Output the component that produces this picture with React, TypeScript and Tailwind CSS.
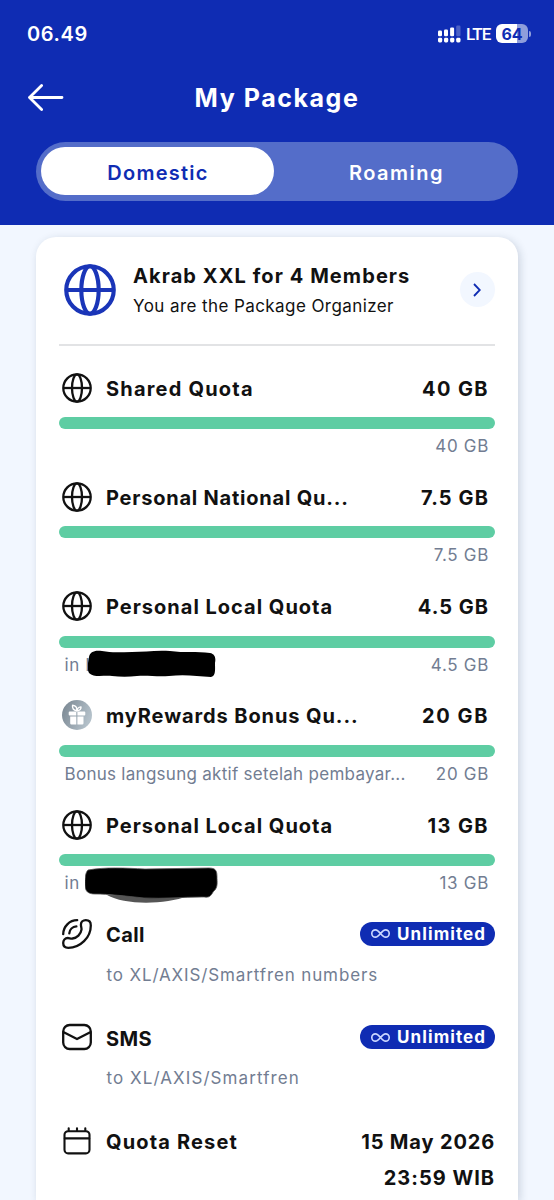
import React from "react";

type IconProps = { className?: string };

function Globe({ className, weight }: IconProps & { weight: number }) {
  return (
    <svg viewBox="0 0 30 30" fill="none" stroke="currentColor" strokeWidth={weight} className={className}>
      <circle cx="15" cy="15" r="13.7" />
      <ellipse cx="15" cy="15" rx="5" ry="13.7" />
      <path d="M1.2 15h27.6" />
    </svg>
  );
}

function Gift({ className }: IconProps) {
  return (
    <svg viewBox="0 0 30 30" className={className}>
      <defs>
        <linearGradient id="silver" x1="0" y1="0" x2="1" y2="0.4">
          <stop offset="0" stopColor="#77848f" />
          <stop offset="1" stopColor="#b3c0c9" />
        </linearGradient>
      </defs>
      <circle cx="15" cy="15" r="15" fill="url(#silver)" />
      <g fill="#fff">
        <path d="M7.7 11.400h6.600v4H7.700a1 1 0 0 1-1-1v-2a1 1 0 0 1 1-1zM15.400 11.400h6.900a1 1 0 0 1 1 1v2a1 1 0 0 1-1 1h-6.900z" />
        <path d="M8.200 16.500h6.100v8H9.400a1.200 1.200 0 0 1-1.200-1.200zM15.400 16.500h6.100v6.800a1.200 1.200 0 0 1-1.200 1.200h-4.900z" />
      </g>
      <g fill="none" stroke="#fff" strokeWidth="1.400" strokeLinejoin="round" strokeLinecap="round">
        <path d="M14.800 10.800c.5-2.900-.6-5.300-4.200-5.600-.7 3.200 1 5 4.200 5.600z" />
        <path d="M14.900 10.800c.2-2.200 1.500-3.600 4.100-3.900.2 2.200-1.500 3.600-4.100 3.900z" />
      </g>
    </svg>
  );
}

function Handset({ className }: IconProps) {
  return (
    <svg viewBox="0 0 30 30" fill="none" stroke="currentColor" strokeWidth="2.300" strokeLinecap="round" className={className}>
      <path d="M18.900 5.800C18.900 3 21 1.200 23.800 1.200c3.100 0 5 2 5 5.200C28.800 18.600 18.300 28.800 6.300 28.800c-3.300 0-5.100-2-5.100-4.800 0-2.900 1.800-5 4.600-5 1.600 0 2.800.700 4.700.500 4.400-.500 8.400-4.300 9-8.900.200-1.800-.600-3-.600-4.800z" />
      <path d="M1.200 15.200C1.200 7.500 7.500 1.200 15.200 1.200" />
      <path d="M7.300 14.300c.300-3.800 3.300-6.700 7.100-7" />
    </svg>
  );
}

function Envelope({ className }: IconProps) {
  return (
    <svg viewBox="0 0 30 30" fill="none" stroke="currentColor" strokeWidth="2.300" strokeLinejoin="round" className={className}>
      <rect x="1.200" y="3" width="27.600" height="24" rx="6.500" />
      <path d="M1.300 10 15 17l13.700-7" />
    </svg>
  );
}

function Calendar({ className }: IconProps) {
  return (
    <svg viewBox="0 0 30 30" fill="none" stroke="currentColor" strokeWidth="2.100" strokeLinecap="round" className={className}>
      <rect x="2.500" y="5.200" width="25" height="22.200" rx="3.600" />
      <path d="M2.800 12.400h24.400M6.700 4.800V2.200M15 4.800V2.200M23.300 4.800V2.200" />
    </svg>
  );
}

function StatusBar() {
  return (
    <div className="flex h-[67px] items-center justify-between pr-[23px] pl-[27px] text-white">
      <span className="text-[20px] leading-6 font-semibold tracking-[0.6px]">06.49</span>
      <div className="flex items-center">
        <svg viewBox="0 0 23 18" className="mr-[5px] h-[18px] w-[23px]" fill="#fff">
          <rect x="0" y="5.500" width="4" height="5.700" rx="1.200" />
          <rect x="6" y="4.500" width="4" height="6.700" rx="1.200" />
          <rect x="12.100" y="2.500" width="4" height="8.700" rx="1.200" />
          <rect x="18.200" y="0.500" width="4.300" height="10.700" rx="1.200" opacity="0.250" />
          <rect x="0" y="12.800" width="4.200" height="4.600" rx="1.400" />
          <rect x="6" y="12.800" width="4.200" height="4.600" rx="1.400" />
          <rect x="12.100" y="12.800" width="4.200" height="4.600" rx="1.400" />
          <rect x="18.200" y="12.800" width="4.300" height="4.600" rx="1.400" />
        </svg>
        <span className="w-[30px] font-['Roboto',sans-serif] text-[17px] leading-5 font-medium tracking-[-0.9px] whitespace-nowrap">LTE</span>
        <div className="flex h-[19px] w-[32px] items-center justify-center rounded-[6px] bg-linear-to-r from-white from-[65%] to-[#8f9edb] to-[65%] text-[16px] leading-none font-bold text-[#0f2cb3]">
          64
        </div>
        <div className="ml-px h-[6px] w-[2px] rounded-r-full bg-[#8f9edb]" />
      </div>
    </div>
  );
}

const globe = <Globe weight={2.3} className="-mt-px size-[30px]" />;

type Quota = {
  icon: React.ReactNode;
  name: string;
  nameClass: string;
  amount: string;
  amountClass: string;
  note?: string;
  noteClass?: string;
  hidden?: React.ReactNode;
};

const quotas: Quota[] = [
  { icon: globe, name: "Shared Quota", nameClass: "tracking-[1.2px]", amount: "40 GB", amountClass: "tracking-[1.4px]" },
  { icon: globe, name: "Personal National Qu...", nameClass: "tracking-[0.78px]", amount: "7.5 GB", amountClass: "tracking-[1.1px]" },
  {
    icon: globe,
    name: "Personal Local Quota",
    nameClass: "tracking-[1px]",
    amount: "4.5 GB",
    amountClass: "tracking-[1px]",
    note: "in K",
    noteClass: "tracking-[0.6px]",
    hidden: (
      <svg viewBox="0 0 132 36" className="absolute top-0 left-[29px] h-[36px] w-[132px]">
        <path d="M1 9C2 4 6 2 14 3c10 2 19 1 30 1 12 0 24-2 38-1 14 2 27 0 40 2 5 1 6 5 5 10 0 6 1 13-4 14-14-1-27-3-42-1-12 1-22-1-32 0-8 1-17 1-25 0-8-1-18 2-23-3-2-4-1-7-1-10z" fill="#000" />
      </svg>
    ),
  },
  {
    icon: <Gift className="-mt-px size-[30px]" />,
    name: "myRewards Bonus Qu...",
    nameClass: "tracking-[0.9px]",
    amount: "20 GB",
    amountClass: "tracking-[1.6px]",
    note: "Bonus langsung aktif setelah pembayar...",
    noteClass: "tracking-[0.28px]",
  },
  {
    icon: globe,
    name: "Personal Local Quota",
    nameClass: "tracking-[1px]",
    amount: "13 GB",
    amountClass: "tracking-[1.4px]",
    note: "in K",
    noteClass: "tracking-[0.6px]",
    hidden: (
      <svg viewBox="0 0 138 38" className="absolute top-px left-[26px] h-[38px] w-[138px]">
        <path d="M22 28c17 10 57 10 81 1z" fill="#555" />
        <path d="M3 3C20 0 40 1 60 2l64-1c7 0 8 3 8 9 0 5 1 9-2 13-2 1-2 3-4 5-2 3-5 2-9 2-20 0-38 2-58 1-19-2-36-4-49-4C4 27 0 25 0 18 0 12 0 6 3 3z" fill="#000" stroke="#555" strokeWidth="0.800" />
      </svg>
    ),
  },
];

function QuotaRow({ q }: { q: Quota }) {
  return (
    <section className="h-[109.33px]">
      <div className="flex h-10 items-center pr-[6px] pl-[3px] text-[20px] font-bold">
        {q.icon}
        <span className={"mt-px ml-[14px] grow " + q.nameClass}>{q.name}</span>
        <span className={"mt-px " + q.amountClass}>{q.amount}</span>
      </div>
      <div className="mt-[9px] h-[12px] rounded-full bg-[#5ecda3]" />
      <div className="relative flex h-[34px] items-start justify-between pt-[6px] pr-[6px] pl-[5.500px] text-[17px] leading-[22px] font-normal text-[#727d92]">
        <span className={q.noteClass}>{q.note}</span>
        <span className="tracking-[0.7px]">{q.amount}</span>
        {q.hidden}
      </div>
    </section>
  );
}

function UnlimitedBadge() {
  return (
    <div className="-mt-[2px] flex h-[24px] w-[135px] items-center rounded-full bg-[#0f2cb3] pl-[10px] text-white">
      <svg viewBox="0 0 22 12" className="h-[11px] w-[21px]" fill="none" stroke="#cbd7ff" strokeWidth="1.800">
        <path d="M11 6C8.500 3 7.300 2 5.500 2a4 4 0 0 0 0 8C7.300 10 8.500 9 11 6s3.700-4 5.500-4a4 4 0 0 1 0 8C14.700 10 13.500 9 11 6z" />
      </svg>
      <span className="ml-[6px] text-[17px] leading-[22px] font-bold tracking-[1.1px]">Unlimited</span>
    </div>
  );
}

function UnlimitedRow({ icon, name, note, noteClass }: { icon: React.ReactNode; name: string; note: string; noteClass: string }) {
  return (
    <section className="h-[103.500px]">
      <div className="flex h-10 items-center pl-[3px]">
        {icon}
        <span className="mt-px ml-[14px] grow text-[20px] font-bold tracking-[0.4px]">{name}</span>
        <UnlimitedBadge />
      </div>
      <p className={"mt-[9px] pl-[47.500px] text-[17px] leading-[22px] font-normal text-[#727d92] " + noteClass}>{note}</p>
    </section>
  );
}

export default function App() {
  return (
    <div className="flex h-[1200px] w-[554px] flex-col overflow-hidden bg-[#f2f7ff] font-['Inter',sans-serif] text-[#111111]">
      <header className="h-[225px] shrink-0 bg-[#0f2cb3]">
        <StatusBar />
        <div className="grid h-[60px] grid-cols-[1fr_auto_1fr] items-center px-[27px]">
          <svg viewBox="0 0 37 28" className="h-[28px] w-[37px]" fill="none" stroke="#fff" strokeWidth="2.800" strokeLinecap="round" strokeLinejoin="round">
            <path d="M35 14.500H2.500M14.600 2.500 2.500 14.500l12.100 12" />
          </svg>
          <h1 className="pt-[3px] text-[25px] font-bold tracking-[1.55px] text-white">My Package</h1>
        </div>
        <nav className="mx-[36px] mt-[15px] flex h-[59px] rounded-full bg-[#546dc9] p-[5px] pb-[6px] text-[20px] font-semibold">
          <div className="flex w-[233px] items-center justify-center rounded-full bg-white pt-[3px] pl-px tracking-[1.25px] text-[#0f2cb3]">Domestic</div>
          <div className="flex grow items-center justify-center pt-[3px] pl-[6px] tracking-[1.5px] text-white">Roaming</div>
        </nav>
      </header>

      <main className="mx-[36px] mt-[12px] grow rounded-t-[20px] bg-white px-[23px] shadow-[2px_2px_8px_rgba(30,50,80,0.18)]">
        <div className="flex h-[109px] items-center border-b-2 border-[#e2e3e5] pb-[2px] pl-[5px]">
          <Globe weight={2.4} className="size-[52px] text-[#1a35b8]" />
          <div className="ml-[17px] grow pt-[2px] whitespace-nowrap">
            <h2 className="text-[20px] leading-[30px] font-bold tracking-[1.08px]">Akrab XXL for 4 Members</h2>
            <p className="text-[17px] leading-[30px] font-normal tracking-[0.42px]">You are the Package Organizer</p>
          </div>
          <div className="flex size-[35px] shrink-0 items-center justify-center rounded-full bg-[#f2f7ff] pr-[2px]">
            <svg viewBox="0 0 8 14" className="h-[14px] w-[8px]" fill="none" stroke="#0f2cb3" strokeWidth="1.800">
              <path d="m1 1 5.800 6L1 13" />
            </svg>
          </div>
        </div>

        <div className="pt-[22px]">
          {quotas.map((q, i) => (
            <QuotaRow key={i} q={q} />
          ))}
          <UnlimitedRow icon={<Handset className="-mt-[2px] size-[30px]" />} name="Call" note="to XL/AXIS/Smartfren numbers" noteClass="tracking-[0.87px]" />
          <UnlimitedRow icon={<Envelope className="-mt-[2px] size-[30px]" />} name="SMS" note="to XL/AXIS/Smartfren" noteClass="tracking-[1.08px]" />
          <section className="flex pl-[3px] text-[20px] font-bold">
            <Calendar className="mt-[4px] size-[30px]" />
            <span className="ml-[14px] grow leading-10 tracking-[1.16px]">Quota Reset</span>
            <div className="flex flex-col pt-[2px] text-right leading-[36px]">
              <span className="tracking-[0.85px]">15 May 2026</span>
              <span className="tracking-[0.99px]">23:59 WIB</span>
            </div>
          </section>
        </div>
      </main>
    </div>
  );
}
